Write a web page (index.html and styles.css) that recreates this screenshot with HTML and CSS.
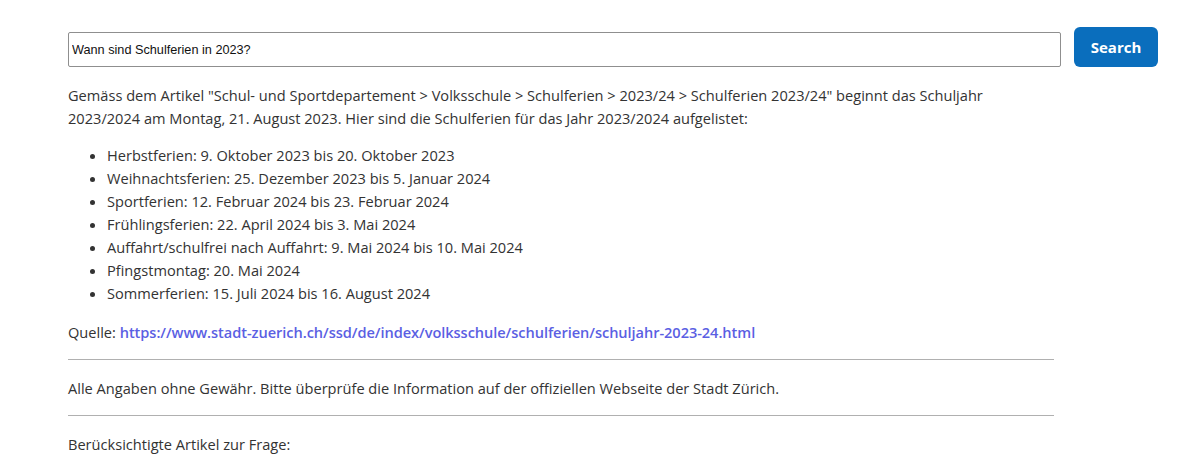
FILE: index.html
```html
<!DOCTYPE html>
<html lang="de">
<head>
<meta charset="utf-8">
<link rel="stylesheet" href="styles.css">
</head>
<body>
<main class="page">
  <form class="search">
    <input class="search-input" type="text" value="Wann sind Schulferien in 2023?">
    <button class="search-button" type="button">Search</button>
  </form>
  <div class="answer">
    <p>Gemäss dem Artikel "Schul- und Sportdepartement &gt; Volksschule &gt; Schulferien &gt; 2023/24 &gt; Schulferien 2023/24" beginnt das Schuljahr 2023/2024 am Montag, 21. August 2023. Hier sind die Schulferien für das Jahr 2023/2024 aufgelistet:</p>
    <ul>
      <li>Herbstferien: 9. Oktober 2023 bis 20. Oktober 2023</li>
      <li>Weihnachtsferien: 25. Dezember 2023 bis 5. Januar 2024</li>
      <li>Sportferien: 12. Februar 2024 bis 23. Februar 2024</li>
      <li>Frühlingsferien: 22. April 2024 bis 3. Mai 2024</li>
      <li>Auffahrt/schulfrei nach Auffahrt: 9. Mai 2024 bis 10. Mai 2024</li>
      <li>Pfingstmontag: 20. Mai 2024</li>
      <li>Sommerferien: 15. Juli 2024 bis 16. August 2024</li>
    </ul>
    <p>Quelle: <a class="link" href="#">https://www.stadt-zuerich.ch/ssd/de/index/volksschule/schulferien/schuljahr-2023-24.html</a></p>
    <hr>
    <p>Alle Angaben ohne Gewähr. Bitte überprüfe die Information auf der offiziellen Webseite der Stadt Zürich.</p>
    <hr>
    <p>Berücksichtigte Artikel zur Frage:</p>
  </div>
</main>
</body>
</html>
```
FILE: styles.css
```css
html, body {
  margin: 0;
  padding: 0;
  background: #fff;
}
body {
  font-family: "Open Sans", "Noto Sans", sans-serif;
  font-size: 14.6px;
  line-height: 23px;
  color: #333;
}
.page {
  padding: 27px 42px 0 68px;
}
.search {
  display: flex;
  align-items: flex-end;
  gap: 13px;
  margin: 0;
}
.search-input {
  flex: 1;
  height: 35px;
  box-sizing: border-box;
  border: 1px solid #8f8f8f;
  border-radius: 2px;
  padding: 0 3px;
  font-family: Arial, "Liberation Sans", sans-serif;
  font-size: 12.7px;
  color: #111;
}
.search-button {
  width: 84px;
  height: 40px;
  border: none;
  border-radius: 6px;
  background: #0a6ebd;
  color: #fff;
  font-family: "Open Sans", "Noto Sans", sans-serif;
  font-weight: 700;
  font-size: 15px;
}
.answer {
  width: 986px;
}
.answer p {
  margin: 0;
}
.answer > p:first-child {
  margin-top: 17px;
}
.answer ul {
  margin: 14px 0 16px;
  padding-left: 39px;
}
.link {
  color: #5b5fe3;
  font-weight: 600;
  letter-spacing: -0.06px;
  text-decoration: none;
}
hr {
  border: none;
  border-top: 1px solid #b0b0b0;
  margin: 15px 0 17px;
}
```
